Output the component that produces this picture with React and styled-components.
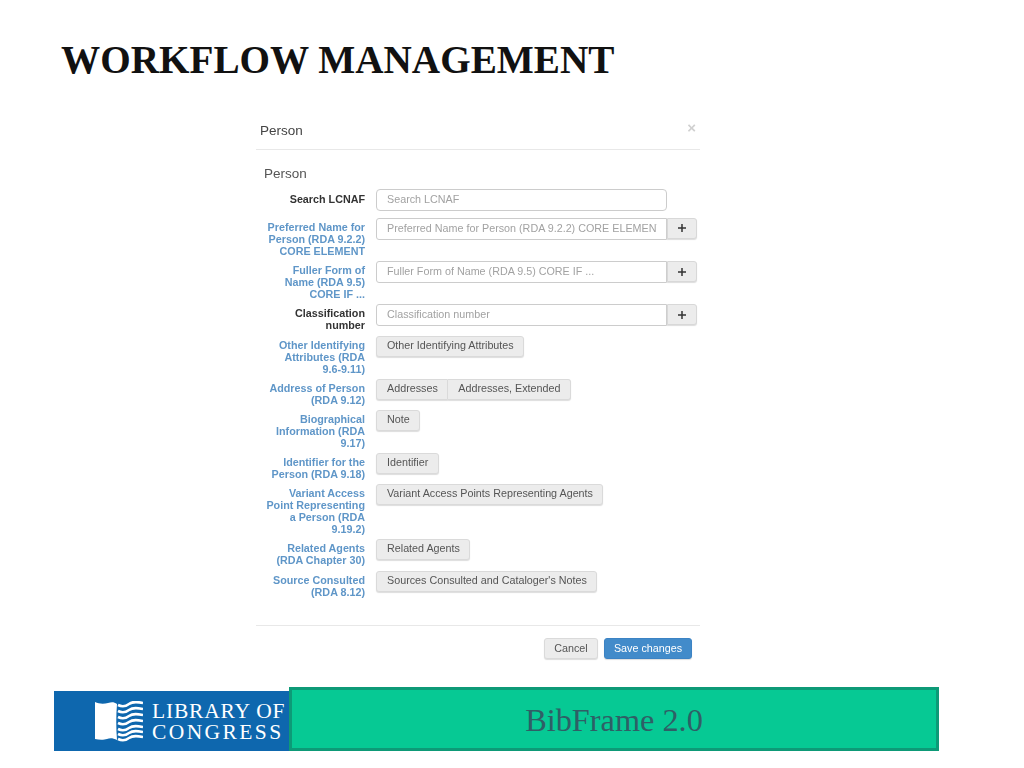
import React from "react";
import styled, { createGlobalStyle } from "styled-components";

const GlobalStyle = createGlobalStyle`
  html, body {
    margin: 0;
    padding: 0;
    background: #fff;
  }
  * {
    box-sizing: border-box;
  }
`;

const Slide = styled.div`
  width: 1024px;
  height: 768px;
  overflow: hidden;
  background: #fff;
  display: flex;
  flex-direction: column;
`;

const Title = styled.h1`
  margin: 0;
  padding: 38px 0 0 61px;
  height: 117px;
  font-family: "Liberation Serif", serif;
  font-size: 39.2px;
  line-height: 44px;
  font-weight: bold;
  color: #111;
`;

const Dialog = styled.div`
  margin-left: 256px;
  width: 444px;
  font-family: "Liberation Sans", Arial, sans-serif;
  filter: blur(0.45px);
`;

const DialogHeader = styled.div`
  height: 33px;
  border-bottom: 1px solid #e8e8e8;
  display: flex;
  justify-content: space-between;
  padding: 6px 4px 0 4px;
  font-size: 13.5px;
  line-height: 16px;
  color: #444;
`;

const Close = styled.span`
  font-size: 15px;
  line-height: 9px;
  font-weight: bold;
  color: #d0d0d0;
`;

const SectionTitle = styled.div`
  margin: 16px 0 0 8px;
  height: 23px;
  font-size: 13.5px;
  line-height: 16px;
  color: #555;
`;

const Row = styled.div`
  display: grid;
  grid-template-columns: 109px auto;
  column-gap: 11px;
  align-items: start;
  min-height: ${(p) => (p.$tall ? "24.8px" : "0")};
  margin-bottom: 4.2px;
`;

const Label = styled.div`
  padding-top: ${(p) => (p.$search ? "4px" : "3px")};
  text-align: right;
  font-size: 10.75px;
  line-height: 12px;
  font-weight: bold;
  white-space: pre-line;
  color: ${(p) => (p.$plain ? "#333" : "#5f96c8")};
`;

const Field = styled.div`
  display: flex;
  align-items: flex-start;
`;

const Input = styled.div`
  width: 291px;
  height: 22px;
  padding: 0 9px 0 10px;
  border: 1px solid #ccc;
  border-radius: ${(p) => (p.$round ? "4px" : "3px 0 0 3px")};
  font-size: 10.75px;
  line-height: 18px;
  color: #a2a2a2;
  background: #fff;
`;

const Placeholder = styled.div`
  overflow: hidden;
  white-space: nowrap;
`;

const AddButton = styled.div`
  width: 30px;
  height: 21px;
  border: 1px solid #d8d8d8;
  border-radius: 0 3px 3px 0;
  background: #ececec;
  box-shadow: 0 1px 1px #ddd;
  display: flex;
  align-items: center;
  justify-content: center;
  color: #333;
  svg {
    display: block;
  }
`;

const Button = styled.div`
  height: 21px;
  padding: 0 9.5px 0 10px;
  border: 1px solid #dadada;
  border-radius: ${(p) => p.$radius || "3px"};
  border-left-width: ${(p) => (p.$joined ? "0" : "1px")};
  background: #ececec;
  box-shadow: 0 1px 1px #ddd;
  font-size: 10.75px;
  line-height: 17px;
  white-space: nowrap;
  color: #555;
`;

const DialogFooter = styled.div`
  margin-top: 27px;
  border-top: 1px solid #e8e8e8;
  padding: 12px 8px 0 0;
  display: flex;
  justify-content: flex-end;
  gap: 6px;
`;

const FooterButton = styled.div`
  height: 21px;
  width: ${(p) => p.$width}px;
  border: 1px solid ${(p) => (p.$primary ? "#3c83c4" : "#dadada")};
  border-radius: 3px;
  background: ${(p) => (p.$primary ? "#428bca" : "#ececec")};
  box-shadow: 0 1px 1px #ddd;
  font-size: 10.75px;
  line-height: 18px;
  text-align: center;
  color: ${(p) => (p.$primary ? "#fff" : "#555")};
`;

const BottomBar = styled.div`
  margin: 28px 0 0 54px;
  display: flex;
  align-items: flex-end;
`;

const Logo = styled.div`
  width: 235px;
  height: 60px;
  padding: 10px 0 0 41px;
  background: #0e67ae;
  display: flex;
  align-items: flex-start;
  gap: 9px;
  color: #fff;
  font-family: "Liberation Serif", serif;
  svg {
    flex: none;
  }
`;

const LogoText = styled.div`
  font-size: 21.5px;
  line-height: 21px;
  white-space: nowrap;
`;

const LogoLine = styled.div`
  letter-spacing: ${(p) => p.$spacing};
`;

const Banner = styled.div`
  width: 650px;
  height: 64px;
  padding-top: 3px;
  border: 3px solid #0d9a77;
  background: #06c994;
  display: flex;
  align-items: center;
  justify-content: center;
  font-family: "Liberation Serif", serif;
  font-size: 32.3px;
  color: #2f5f66;
`;

const rows = [
  { label: "Preferred Name for\nPerson (RDA 9.2.2)\nCORE ELEMENT", input: "Preferred Name for Person (RDA 9.2.2) CORE ELEMENT" },
  { label: "Fuller Form of\nName (RDA 9.5)\nCORE IF ...", input: "Fuller Form of Name (RDA 9.5) CORE IF ..." },
  { label: "Classification\nnumber", input: "Classification number", plain: true },
  { label: "Other Identifying\nAttributes (RDA\n9.6-9.11)", buttons: ["Other Identifying Attributes"] },
  { label: "Address of Person\n(RDA 9.12)", buttons: ["Addresses", "Addresses, Extended"] },
  { label: "Biographical\nInformation (RDA\n9.17)", buttons: ["Note"] },
  { label: "Identifier for the\nPerson (RDA 9.18)", buttons: ["Identifier"] },
  { label: "Variant Access\nPoint Representing\na Person (RDA\n9.19.2)", buttons: ["Variant Access Points Representing Agents"] },
  { label: "Related Agents\n(RDA Chapter 30)", buttons: ["Related Agents"] },
  { label: "Source Consulted\n(RDA 8.12)", buttons: ["Sources Consulted and Cataloger's Notes"] },
];

const waveOffsets = [4, 10, 16, 22, 28, 33, 38];

const PlusIcon = () => (
  <svg width="10" height="10" viewBox="0 0 10 10">
    <path d="M5 1v8M1 5h8" stroke="currentColor" strokeWidth="1.5" />
  </svg>
);

const BookIcon = () => (
  <svg width="48" height="41" viewBox="0 0 48 41">
    <path d="M0 1c4 2 9 2 13 1s6-1 9 1c-1 12-1 24 0 36-4-2-7-2-10-1s-8 1-12 0z" fill="#fff" />
    <g fill="none" stroke="#fff" strokeWidth="2.6">
      {waveOffsets.map((y) => (
        <path key={y} d={`M23 ${y}c4 2 7 2 11-1s9-2 14-1`} />
      ))}
    </g>
  </svg>
);

const joinRadius = (i, count) => {
  if (count === 1) return "3px";
  return i === 0 ? "3px 0 0 3px" : "0 3px 3px 0";
};

export default function App() {
  return (
    <Slide>
      <GlobalStyle />
      <Title>WORKFLOW MANAGEMENT</Title>
      <Dialog>
        <DialogHeader>
          <span>Person</span>
          <Close>×</Close>
        </DialogHeader>
        <SectionTitle>Person</SectionTitle>
        <Row $tall>
          <Label $plain $search>Search LCNAF</Label>
          <Field>
            <Input $round>
              <Placeholder>Search LCNAF</Placeholder>
            </Input>
          </Field>
        </Row>
        {rows.map((row) => (
          <Row key={row.label}>
            <Label $plain={row.plain}>{row.label}</Label>
            <Field>
              {row.input && (
                <>
                  <Input>
                    <Placeholder>{row.input}</Placeholder>
                  </Input>
                  <AddButton>
                    <PlusIcon />
                  </AddButton>
                </>
              )}
              {row.buttons &&
                row.buttons.map((text, i) => (
                  <Button key={text} $joined={i > 0} $radius={joinRadius(i, row.buttons.length)}>
                    {text}
                  </Button>
                ))}
            </Field>
          </Row>
        ))}
        <DialogFooter>
          <FooterButton $width={54}>Cancel</FooterButton>
          <FooterButton $width={88} $primary>
            Save changes
          </FooterButton>
        </DialogFooter>
      </Dialog>
      <BottomBar>
        <Logo>
          <BookIcon />
          <LogoText>
            <LogoLine $spacing="0.8px">LIBRARY OF</LogoLine>
            <LogoLine $spacing="2.4px">CONGRESS</LogoLine>
          </LogoText>
        </Logo>
        <Banner>BibFrame 2.0</Banner>
      </BottomBar>
    </Slide>
  );
}
